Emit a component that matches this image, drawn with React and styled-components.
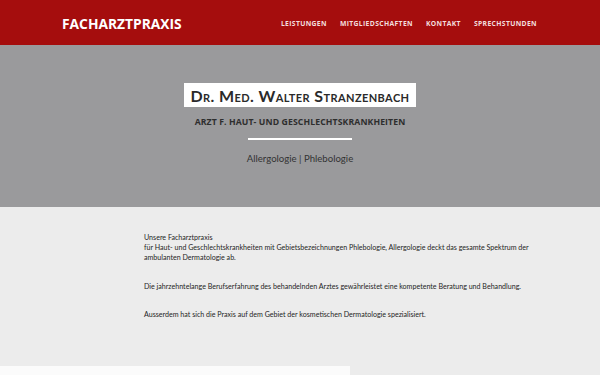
import React from 'react'
import styled, { createGlobalStyle } from 'styled-components'

const GlobalStyle = createGlobalStyle`
  html, body {
    margin: 0;
    padding: 0;
    background: #ececec;
  }
  * {
    box-sizing: border-box;
  }
`

const navItems = ['Leistungen', 'Mitgliedschaften', 'Kontakt', 'Sprechstunden']

const paragraphs = [
  [
    'Unsere Facharztpraxis',
    'für Haut- und Geschlechtskrankheiten mit Gebietsbezeichnungen Phlebologie, Allergologie deckt das gesamte Spektrum der ambulanten Dermatologie ab.',
  ],
  ['Die jahrzehntelange Berufserfahrung des behandelnden Arztes gewährleistet eine kompetente Beratung und Behandlung.'],
  ['Ausserdem hat sich die Praxis auf dem Gebiet der kosmetischen Dermatologie spezialisiert.'],
]

const App = () => {
  return (
    <Page>
      <GlobalStyle />
      <Header>
        <Logo>Facharztpraxis</Logo>
        <Nav>
          {navItems.map(item => (
            <NavLink key={item}>{item}</NavLink>
          ))}
        </Nav>
      </Header>
      <Hero>
        <NameBox>Dr. Med. Walter Stranzenbach</NameBox>
        <Subtitle>Arzt f. Haut- und Geschlechtskrankheiten</Subtitle>
        <Divider />
        <Specialties>Allergologie | Phlebologie</Specialties>
      </Hero>
      <Content>
        {paragraphs.map((lines, i) => (
          <Paragraph key={i}>
            {lines.map((line, j) => (
              <React.Fragment key={j}>
                {j > 0 && <br />}
                {line}
              </React.Fragment>
            ))}
          </Paragraph>
        ))}
      </Content>
      <Footer>
        <FooterPanel />
      </Footer>
    </Page>
  )
}

const Page = styled.div`
  width: 600px;
  height: 375px;
  overflow: hidden;
  display: flex;
  flex-direction: column;
  background: #ececec;
`

const Header = styled.header`
  height: 45px;
  flex-shrink: 0;
  background: #a50d0d;
  display: flex;
  align-items: center;
  padding: 0 63px 0 62px;
  justify-content: space-between;
`

const Logo = styled.div`
  color: #fff;
  font-family: 'Open Sans', sans-serif;
  font-weight: 700;
  font-size: 13.8px;
  text-transform: uppercase;
  margin-top: 2px;
`

const Nav = styled.nav`
  display: flex;
  gap: 13px;
  margin-top: 1px;
`

const NavLink = styled.a`
  color: #f3dede;
  font-family: 'Open Sans', sans-serif;
  font-weight: 700;
  font-size: 6.8px;
  text-transform: uppercase;
  letter-spacing: 0.35px;
  cursor: pointer;
`

const Hero = styled.section`
  height: 162px;
  flex-shrink: 0;
  background: #9a9a9c;
  display: flex;
  flex-direction: column;
  align-items: center;
  padding-top: 38px;
`

const NameBox = styled.h1`
  margin: 0;
  background: #fff;
  width: 232px;
  height: 24px;
  display: flex;
  align-items: center;
  justify-content: center;
  color: #2a2a2a;
  font-family: Lato, sans-serif;
  font-weight: 700;
  font-size: 16px;
  font-variant: small-caps;
  letter-spacing: 0.4px;
`

const Subtitle = styled.h2`
  margin: 9px 0 0;
  color: #2e2e2e;
  font-family: 'Open Sans', sans-serif;
  font-weight: 700;
  font-size: 8.7px;
  text-transform: uppercase;
  letter-spacing: 0.1px;
`

const Divider = styled.hr`
  margin: 10px 0 0;
  width: 104px;
  height: 2px;
  border: 0;
  background: #fff;
`

const Specialties = styled.p`
  margin: 13px 0 0;
  color: #333;
  font-family: Lato, sans-serif;
  font-size: 9.6px;
`

const Content = styled.main`
  flex: 1;
  padding: 26px 70px 0 144px;
`

const Paragraph = styled.p`
  margin: 0 0 18.5px;
  color: #1e1e1e;
  font-family: Lato, sans-serif;
  font-size: 7.1px;
  line-height: 10px;
`

const Footer = styled.footer`
  height: 9px;
  flex-shrink: 0;
  display: flex;
`

const FooterPanel = styled.div`
  width: 350px;
  background: #fbfbfb;
`

export default App
